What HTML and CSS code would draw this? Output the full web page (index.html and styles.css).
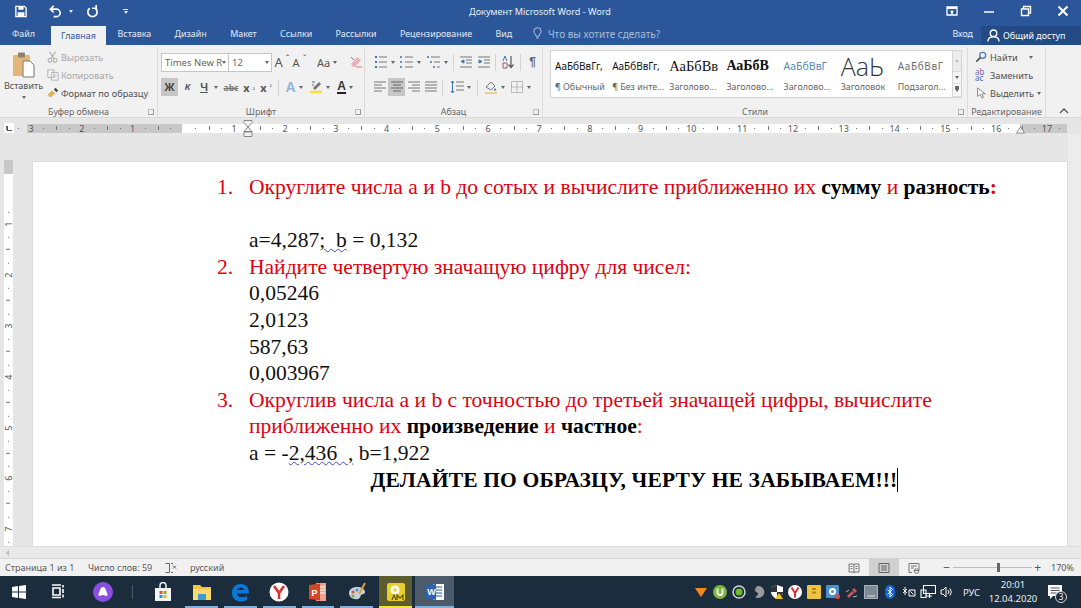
FILE: index.html
```html
<!DOCTYPE html>
<html lang="ru">
<head>
<meta charset="utf-8">
<title>Документ Microsoft Word - Word</title>
<link rel="stylesheet" href="styles.css">
</head>
<body>
<div class="app">
  <header class="titlebar">
    <div class="qat">
      <svg class="q-save" viewBox="0 0 14 14"><path d="M1 1h10l2 2v10H1z" fill="none" stroke="#fff" stroke-width="1.6"/><path d="M4 1h6v4H4zM3 8h8v5H3z" fill="#fff"/></svg>
      <svg class="q-undo" viewBox="0 0 14 14"><path d="M5 1L1.500 4.500 5 8M2 4.500h6a4 4 0 0 1 0 8H5" fill="none" stroke="#fff" stroke-width="1.800"/></svg>
      <span class="c cw q-c1"></span>
      <svg class="q-redo" viewBox="0 0 14 14"><path d="M4 3.500a5 5 0 1 0 6 0M6.500 3.500h4.500V0" fill="none" stroke="#fff" stroke-width="1.800"/></svg>
      <span class="q-more"><i></i><span class="c cw"></span></span>
    </div>
    <div class="doc-title">Документ Microsoft Word - Word</div>
    <div class="winctl">
      <svg class="wc" viewBox="0 0 12 12"><path d="M1 2h10v8H1z" fill="none" stroke="#fff" stroke-width="1.300"/><path d="M1 2h10v2H1zM6 5l2 2H7v2H5V7H4z" fill="#fff"/></svg>
      <svg class="wc" viewBox="0 0 12 12"><path d="M1 7h10" stroke="#fff" stroke-width="1.500"/></svg>
      <svg class="wc" viewBox="0 0 12 12"><path d="M1.500 4h7v6.500h-7zM3.500 3.500V1.500h7v6.500h-2" fill="none" stroke="#fff" stroke-width="1.400"/></svg>
      <svg class="wc" viewBox="0 0 12 12"><path d="M1.500 1.500l9 9M10.500 1.500l-9 9" stroke="#fff" stroke-width="2"/></svg>
    </div>
  </header>

  <nav class="tabs">
    <a class="tab file">Файл</a>
    <a class="tab active">Главная</a>
    <a class="tab">Вставка</a>
    <a class="tab">Дизайн</a>
    <a class="tab">Макет</a>
    <a class="tab">Ссылки</a>
    <a class="tab">Рассылки</a>
    <a class="tab">Рецензирование</a>
    <a class="tab">Вид</a>
    <span class="tell">
      <svg class="bulb" viewBox="0 0 10 14"><path d="M3.500 10C3 8 1 7 1 4.500a4 4 0 0 1 8 0C9 7 7 8 6.500 10zM3.500 12h3" fill="none" stroke="#c5d3e8" stroke-width="1"/></svg>
      Что вы хотите сделать?
    </span>
    <span class="signin">Вход</span>
    <span class="share">
      <svg class="person" viewBox="0 0 14 14"><circle cx="7" cy="4.500" r="3.500" fill="none" stroke="#fff" stroke-width="1.500"/><path d="M1 13.500c0-3.500 2.500-5 6-5s6 1.500 6 5" fill="none" stroke="#fff" stroke-width="1.500"/></svg>
      Общий доступ
    </span>
  </nav>

  <section class="ribbon">
    <div class="group g-clip">
      <div class="g-body clip-body">
        <div class="paste">
          <svg class="paste-ic" viewBox="0 0 24 26"><rect x="1" y="3" width="17" height="21" rx="1" fill="#e3b779"/><rect x="6" y="0.500" width="7" height="5" rx="1" fill="#8c8170"/><path d="M11 9h7l4 4v12H11z" fill="#fff" stroke="#777"/></svg>
          <span>Вставить</span>
          <span class="c"></span>
        </div>
        <div class="clip-list">
          <div class="row dim"><svg class="ic12" viewBox="0 0 14 14"><circle cx="3.500" cy="11" r="2.200" fill="none" stroke="#aaa" stroke-width="1.200"/><circle cx="9.500" cy="11" r="2.200" fill="none" stroke="#aaa" stroke-width="1.200"/><path d="M4.500 9L10 1M8.500 9L3 1" stroke="#aaa" stroke-width="1.200"/></svg>Вырезать</div>
          <div class="row dim"><svg class="ic12" viewBox="0 0 14 14"><path d="M1 1h7v9H1zM5 4h8v9H5z" fill="#f6f6f6" stroke="#aaa"/><path d="M7 7h4M7 9h4" stroke="#bbb"/></svg>Копировать</div>
          <div class="row"><svg class="ic12" viewBox="0 0 14 14"><path d="M1 9l5-5 4 4-3 1-2 3-1-1-1 1z" fill="#e0b050"/><path d="M8 3l2-2 3 3-2 2z" fill="#444"/></svg>Формат по образцу</div>
        </div>
      </div>
      <div class="g-label">Буфер обмена<i class="launch"></i></div>
    </div>

    <div class="group g-font">
      <div class="g-body stack">
        <div class="row1">
          <span class="combo font-name"><span class="clip">Times New R</span><span class="c"></span></span>
          <span class="combo font-size">12<span class="c"></span></span>
          <span class="b w18 big-a">A<sup>ˆ</sup></span>
          <span class="b w17 small-a">A<sup>ˇ</sup></span>
          <span class="b w30 aa">Aa<span class="c"></span></span>
          <svg class="ic14 eraser" viewBox="0 0 14 14"><path d="M2 9l6-7 4 3-6 7H4z" fill="#ecb0b8"/><path d="M7 12h6" stroke="#e07080"/><path d="M2 2l3 3" stroke="#777"/></svg>
        </div>
        <div class="row2">
          <span class="b w17 on bold">Ж</span>
          <span class="b w19 ital">К</span>
          <span class="b w24 und"><u>Ч</u><span class="c"></span></span>
          <span class="b w20 strike">abc</span>
          <span class="b w16 sub">x<small>₂</small></span>
          <span class="b w18 sub">x<small>²</small></span>
          <i class="sep"></i>
          <span class="b w24 a-effect">A<span class="c"></span></span>
          <span class="b w26 hl"><svg class="ic14" viewBox="0 0 14 14"><path d="M3 2h3M3 5h2" stroke="#666"/><path d="M4 8l6-6 2 2-6 6z" fill="#777"/><path d="M1 12h12" stroke="#f7e23c" stroke-width="2.500"/></svg><span class="c"></span></span>
          <span class="b w26 fc"><span class="fc-a">А</span><span class="c"></span></span>
        </div>
      </div>
      <div class="g-label">Шрифт<i class="launch"></i></div>
    </div>

    <div class="group g-para">
      <div class="g-body stack para-stack">
        <div class="row1">
          <span class="b w26"><svg class="ic14" viewBox="0 0 14 14"><path d="M1 2h2M1 7h2M1 12h2" stroke="#3b72b8" stroke-width="2"/><path d="M5 2h8M5 7h8M5 12h8" stroke="#777"/></svg><span class="c"></span></span>
          <span class="b w27"><svg class="ic14" viewBox="0 0 14 14"><path d="M1 1v2M1 6v2M1 11v2" stroke="#3b72b8" stroke-width="1.500"/><path d="M5 2h8M5 7h8M5 12h8" stroke="#777"/></svg><span class="c"></span></span>
          <span class="b w26"><svg class="ic14" viewBox="0 0 14 14"><path d="M0 2h2M3 7h2M6 12h2" stroke="#3b72b8" stroke-width="1.500"/><path d="M4 2h9M7 7h6M10 12h3" stroke="#777"/></svg><span class="c"></span></span>
          <i class="sep"></i>
          <span class="b w18"><svg class="ic14" viewBox="0 0 14 14"><path d="M1 2h12M7 5h6M7 8h6M1 12h12" stroke="#777"/><path d="M5 5L2 6.500 5 8z" fill="#3b72b8" stroke="#3b72b8"/></svg></span>
          <span class="b w17"><svg class="ic14" viewBox="0 0 14 14"><path d="M1 2h12M7 5h6M7 8h6M1 12h12" stroke="#777"/><path d="M2 5l3 1.500L2 8z" fill="#3b72b8" stroke="#3b72b8"/></svg></span>
          <i class="sep"></i>
          <span class="b w18"><svg class="ic14" viewBox="0 0 14 14"><path d="M10 1v11M7.500 9.500L10 12.500l2.500-3" fill="none" stroke="#555" stroke-width="1.200"/><path d="M2 6l2-5 2 5" fill="none" stroke="#3b72b8"/><path d="M2 8h4v5H2z" fill="none" stroke="#a0526d"/></svg></span>
          <i class="sep"></i>
          <span class="b w17 pil">¶</span>
        </div>
        <div class="row2">
          <span class="b w17"><svg class="ic14" viewBox="0 0 14 14"><path d="M1 2h12M1 5h8M1 8h12M1 11h8" stroke="#777"/></svg></span>
          <span class="b w17 on"><svg class="ic14" viewBox="0 0 14 14"><path d="M1 2h12M3 5h8M1 8h12M3 11h8" stroke="#666"/></svg></span>
          <span class="b w17"><svg class="ic14" viewBox="0 0 14 14"><path d="M1 2h12M5 5h8M1 8h12M5 11h8" stroke="#777"/></svg></span>
          <span class="b w17"><svg class="ic14" viewBox="0 0 14 14"><path d="M1 2h12M1 5h12M1 8h12M1 11h12" stroke="#777"/></svg></span>
          <i class="sep"></i>
          <span class="b w28"><svg class="ic14" viewBox="0 0 14 14"><path d="M6 2h8M6 6h8M6 10h8" stroke="#777"/><path d="M2.500 1v12M1 3l1.500-2L4 3M1 11l1.500 2L4 11" fill="none" stroke="#3b72b8"/></svg><span class="c"></span></span>
          <i class="sep"></i>
          <span class="b w26"><svg class="ic14" viewBox="0 0 14 14"><path d="M2 7l5-5 4 4-4 4z" fill="none" stroke="#777"/><path d="M11 8l1.500 2.500h-3z" fill="#3b72b8"/><path d="M1 13h12" stroke="#e8c660" stroke-width="1.500"/></svg><span class="c"></span></span>
          <span class="b w26"><svg class="ic14" viewBox="0 0 14 14"><path d="M1.500 1.500h11v11h-11zM7 1.500v11M1.500 7h11" fill="none" stroke="#888" stroke-dasharray="1 1"/></svg><span class="c"></span></span>
        </div>
      </div>
      <div class="g-label">Абзац<i class="launch"></i></div>
    </div>

    <div class="group g-styles">
      <div class="g-body gallery-wrap">
        <div class="gallery">
          <div class="st"><b class="s-n">АаБбВвГг,</b><span>¶ Обычный</span></div>
          <div class="st"><b class="s-n">АаБбВвГг,</b><span>¶ Без инте...</span></div>
          <div class="st"><b class="s-h1">АаБбВв</b><span>Заголово...</span></div>
          <div class="st"><b class="s-h2">АаБбВ</b><span>Заголово...</span></div>
          <div class="st"><b class="s-h3">АаБбВвГ</b><span>Заголово...</span></div>
          <div class="st"><b class="s-t">АаЬ</b><span>Заголовок</span></div>
          <div class="st"><b class="s-sub">АаБбВвГ</b><span>Подзагол...</span></div>
        </div>
        <div class="gal-btns">
          <span class="off"><i class="c up"></i></span>
          <span><i class="c"></i></span>
          <span><i class="c more"></i></span>
        </div>
      </div>
      <div class="g-label">Стили<i class="launch"></i></div>
    </div>

    <div class="group g-edit">
      <div class="g-body edit-list">
        <div class="row"><svg class="ic12" viewBox="0 0 14 14"><circle cx="9" cy="5" r="3.500" fill="none" stroke="#4a7ab5" stroke-width="1.500"/><path d="M6.500 7.500L1.500 12.500" stroke="#555" stroke-width="2"/></svg>Найти<span class="c ecar"></span></div>
        <div class="row"><span class="abac"><b class="ab">ab</b><b class="ac">ac</b></span>Заменить</div>
        <div class="row"><svg class="ic12" viewBox="0 0 14 14"><path d="M3 1v10l3-2.500L8 13l2-1-2-4h4z" fill="#fff" stroke="#777"/></svg>Выделить<span class="c"></span></div>
      </div>
      <div class="g-label">Редактирование</div>
    </div>
    <div class="collapse"><svg viewBox="0 0 10 6"><path d="M1 5l4-4 4 4" fill="none" stroke="#555" stroke-width="1.300"/></svg></div>
  </section>

  <div class="ruler-row">
    <span class="corner"><i></i></span>
    <div class="ruler-track">
      <span class="rc first">3</span><span class="rc">2</span><span class="rc">1</span><span class="rc"></span><span class="rc">1</span><span class="rc">2</span><span class="rc">3</span><span class="rc">4</span><span class="rc">5</span><span class="rc">6</span><span class="rc">7</span><span class="rc">8</span><span class="rc">9</span><span class="rc">10</span><span class="rc">11</span><span class="rc">12</span><span class="rc">13</span><span class="rc">14</span><span class="rc">15</span><span class="rc">16</span><span class="rc">17</span>
      <svg class="indent" viewBox="0 0 10 17"><path d="M1 .500h8v2L5 7 1 2.500zM5 7l4 4.500H1zM1 12h8v4.500H1z" fill="#f3f3f3" stroke="#888"/></svg>
      <svg class="r-indent" viewBox="0 0 10 8"><path d="M5 .500l4.500 7H.500z" fill="#f3f3f3" stroke="#888"/></svg>
    </div>
  </div>

  <main class="workspace">
    <div class="vruler">
      <span class="vc zero"></span><span class="vc">1</span><span class="vc">2</span><span class="vc">3</span><span class="vc">4</span><span class="vc">5</span><span class="vc">6</span><span class="vc">7</span>
    </div>
    <article class="page">
      <p class="red"><span class="num">1.</span>Округлите числа а и b до сотых и вычислите приближенно их <b class="blk">сумму</b> и <b class="blk">разность</b><b>:</b></p>
      <p>&nbsp;</p>
      <p>a=4,287<span class="wavy">;  b</span> = 0,132</p>
      <p class="red"><span class="num">2.</span>Найдите четвертую значащую цифру для чисел:</p>
      <p>0,05246</p>
      <p>2,0123</p>
      <p>587,63</p>
      <p>0,003967</p>
      <p class="red"><span class="num">3.</span>Округлив числа а и b с точностью до третьей значащей цифры, вычислите приближенно их <b class="blk">произведение</b> и <b class="blk">частное</b>:</p>
      <p>a = -<span class="wavy">2,436  ,</span> b=1,922</p>
      <p class="center"><b>ДЕЛАЙТЕ ПО ОБРАЗЦУ, ЧЕРТУ НЕ ЗАБЫВАЕМ!!!</b><i class="caret"></i></p>
    </article>
    <div class="vscroll"></div>
  </main>
  <div class="hscroll"><i class="c left"></i></div>

  <footer class="status">
    <span class="s1">Страница 1 из 1</span>
    <span class="s2">Число слов: 59</span>
    <svg class="s3" viewBox="0 0 12 12"><path d="M.500 1.500h4v9h-4M6 1.500h2M6 10.500h2" fill="none" stroke="#666"/><path d="M8 3.500l3 3M11 3.500l-3 3" stroke="#666"/></svg>
    <span class="s4">русский</span>
    <div class="views">
      <span class="v"><svg viewBox="0 0 12 12"><path d="M1 2h4.500l.5 1 .5-1H11v8H6.500L6 11l-.5-1H1zM6 3v8M2.500 4.500h2M2.500 6.500h2M7.500 4.500h2M7.500 6.500h2" fill="none" stroke="#777"/></svg></span>
      <span class="v active"><svg viewBox="0 0 12 12"><path d="M1 1.500h10v9H1zM3 4h6M3 6h6M3 8h6" fill="none" stroke="#666"/></svg></span>
      <span class="v"><svg viewBox="0 0 12 12"><path d="M1 1.500h10v7H6.500M1 1.500v9h3M3 4h6M3 6h3" fill="none" stroke="#777"/><circle cx="8.500" cy="9" r="2.300" fill="none" stroke="#777"/></svg></span>
    </div>
    <span class="z-minus">−</span>
    <span class="slider"><i></i></span>
    <span class="z-plus">+</span>
    <span class="z-val">170%</span>
  </footer>

  <div class="taskbar">
    <span class="slot"><svg class="i16" viewBox="0 0 16 16"><path d="M1 3l6-1v5.500H1zM8 2l7-1v6.500H8zM1 8.500h6V14l-6-1zM8 8.500h7V15l-7-1z" fill="#fff"/></svg></span>
    <span class="slot"><svg class="i16" viewBox="0 0 16 16"><path d="M2 1h9M2 13.500h9M3 4h7v7H3zM13 1v2.500M13 5v4M13 10.500v3" fill="none" stroke="#fff" stroke-width="1.600"/></svg></span>
    <span class="slot alice"><svg class="i20" viewBox="0 0 20 20"><circle cx="10" cy="10" r="10" fill="#8a4fe0"/><path d="M10 5c2.500 0 3 3.500 4.500 7 .5 1.500-1 2.500-2.500 1.500-1.200-.8-2.800-.8-4 0C6.500 14.500 5 13.500 5.500 12 7 8.500 7.500 5 10 5z" fill="#fff"/></svg></span>
    <i class="tb-sep"></i>
    <span class="slot"><svg class="i20" viewBox="0 0 20 20"><path d="M2 6h16v13H2z" fill="#f4f4f4"/><path d="M7 6V3.500a3 3 0 0 1 6 0V6" fill="none" stroke="#f4f4f4" stroke-width="1.500"/><path d="M6.500 9h3v3h-3z" fill="#e8532b"/><path d="M10.500 9h3v3h-3z" fill="#7ab800"/><path d="M6.500 13h3v3h-3z" fill="#1a9cdc"/><path d="M10.500 13h3v3h-3z" fill="#f7b500"/></svg></span>
    <span class="slot run"><svg class="i20" viewBox="0 0 20 20"><path d="M1 3h7l2 2h9v13H1z" fill="#f5c343"/><path d="M1 7h18v11H1z" fill="#ffd968"/><path d="M6 12h8v6H6z" fill="#3d9ad1"/></svg></span>
    <span class="slot run"><svg class="i20" viewBox="0 0 20 20"><path d="M2 11C2 5 6 2 11 2c5 0 8 3.500 8 9.500H7c.3 4 5.500 5 10 2.500v4c-6 3-15 1.500-15-7zM7 8h7c0-3.500-6-3.500-7 0z" fill="#0a78d6"/></svg></span>
    <span class="slot run"><svg class="i20" viewBox="0 0 20 20"><circle cx="10" cy="10" r="9.500" fill="#fff"/><path d="M5 4l5 7 5-7M10 11v6" fill="none" stroke="#e12c2c" stroke-width="2.500"/></svg></span>
    <span class="slot run"><svg class="i20" viewBox="0 0 20 20"><path d="M8 1h10v18H8z" fill="#f0a090"/><path d="M11 5h6M11 8h6M11 11h6" stroke="#fff" stroke-width="1.200"/><path d="M1 3l11-1.500v17L1 17z" fill="#d0472a"/><text x="3.500" y="13.500" class="tb-l">P</text></svg></span>
    <span class="slot run"><svg class="i20" viewBox="0 0 20 20"><path d="M2 11c0-4 4-6 8-6s8 2 8 5c0 2.500-3 2-4 3s0 3-3 4c-5 1-9-2-9-6z" fill="#c9cfd6"/><circle cx="6" cy="10" r="1.500" fill="#e04c3c"/><circle cx="10" cy="8" r="1.500" fill="#3b8ed8"/><circle cx="6" cy="14" r="1.500" fill="#6ab04c"/><path d="M12 12L18 1" stroke="#d9a441" stroke-width="2"/></svg></span>
    <span class="slot run yellow"><svg class="i20" viewBox="0 0 20 20"><rect x="1" y="1" width="18" height="18" rx="2" fill="#e8d02c"/><circle cx="9" cy="8" r="4.500" fill="#fff"/><circle cx="9" cy="8" r="1.800" fill="#e8d02c"/><path d="M6 18l2-5 2 5M11 18v-5l3 3 3-3v5" fill="none" stroke="#6a5a00" stroke-width="1.300"/></svg></span>
    <span class="slot run word"><svg class="i20" viewBox="0 0 20 20"><path d="M8 2h11v16H8z" fill="#fff"/><path d="M11 5h6M11 8h6M11 11h6M11 14h6" stroke="#2b579a" stroke-width="1.200"/><path d="M1 3.500l10-1.500v16L1 16.500z" fill="#2b62b5"/><text x="2.200" y="12.500" class="tb-l">W</text></svg></span>
    <div class="tray">
      <span class="t"><svg class="i14" viewBox="0 0 14 14"><path d="M1 3h12L7 12z" fill="#f08a1d"/></svg></span>
      <span class="t"><svg class="i14" viewBox="0 0 14 14"><circle cx="7" cy="7" r="7" fill="#7eb53f"/><path d="M4.500 3.500v4a2.500 2.500 0 0 0 5 0v-4" fill="none" stroke="#fff" stroke-width="1.800"/></svg></span>
      <span class="t"><svg class="i14" viewBox="0 0 14 14"><circle cx="7" cy="7" r="6" fill="none" stroke="#cfd6d6" stroke-width="1.500"/><circle cx="7" cy="7" r="3.500" fill="#6cc024"/></svg></span>
      <span class="t"><svg class="i14" viewBox="0 0 14 14"><path d="M7 1a6 6 0 1 1-3 11c3-1 3-3 3-4-1-.5-3-1-3-3 0-2 2-4 3-4z" fill="#9a9a9a"/></svg></span>
      <span class="t"><svg class="i14" viewBox="0 0 14 14"><path d="M7 0l6 2v5c0 3-2.500 5.500-6 7-3.500-1.500-6-4-6-7V2z" fill="#fff"/><path d="M7 0v7H1V2zM7 7h6c0 3-2.500 5.500-6 7z" fill="#333"/><path d="M9 8l4 6H5z" fill="#f5c518"/></svg></span>
      <span class="t"><svg class="i14" viewBox="0 0 14 14"><circle cx="7" cy="7" r="7" fill="#fff"/><path d="M3.500 2.500L7 8l3.500-5.500M7 8v4.500" fill="none" stroke="#e12c2c" stroke-width="2"/></svg></span>
      <span class="t"><svg class="i14" viewBox="0 0 14 14"><rect width="14" height="14" rx="1" fill="#efc33d"/><path d="M5 3h4v2H5zM5 6.500h4v2H5z" fill="#b9801d"/></svg></span>
      <span class="t"><svg class="i14" viewBox="0 0 14 14"><rect width="13" height="13" rx="1" fill="#4a90c8"/><circle cx="6.500" cy="6.500" r="3.500" fill="#fff"/><circle cx="6.500" cy="6.500" r="1.500" fill="#4a90c8"/><circle cx="11.500" cy="11.500" r="2.500" fill="#d94848"/></svg></span>
      <span class="t"><svg class="i14" viewBox="0 0 14 14"><path d="M2 11l5-5 2 2-5 5zM9 3l3 3-2 2-3-3z" fill="#c9565c"/><path d="M1 7l3-2M8 12l4-1" stroke="#bbb"/></svg></span>
      <span class="t"><svg class="i14" viewBox="0 0 14 14"><rect x=".500" y=".500" width="13" height="13" fill="#7d8a96" stroke="#a9b2ba"/><path d="M3 11h8" stroke="#dfe3e6"/></svg></span>
      <span class="t"><svg class="i14" viewBox="0 0 14 14"><rect x="2" width="10" height="14" rx="5" fill="#1467d2"/><path d="M4.500 4.500l5 5L7 12V2l2.500 2.500-5 5" fill="none" stroke="#fff"/></svg></span>
      <span class="t"><svg class="i14" viewBox="0 0 14 14"><path d="M3 2v8M1 4l4 4M5 4L1 8" stroke="#fff"/><path d="M7 5h6v6H7zM8.500 6.500l3 3" fill="none" stroke="#fff"/></svg></span>
      <span class="t"><svg class="i16" viewBox="0 0 16 16"><path d="M3.500 1.500h12v8h-12zM1 6h5v7.500H1zM6 12h6M9.500 9.500V14" fill="none" stroke="#fff" stroke-width="1.100"/></svg></span>
      <span class="t"><svg class="i14" viewBox="0 0 14 14"><path d="M1 5h2l3-3v10L3 9H1z" fill="none" stroke="#fff"/><path d="M8 5a3 3 0 0 1 0 4M10 3.500a6 6 0 0 1 0 7" fill="none" stroke="#fff"/></svg></span>
      <span class="lang">РУС</span>
      <span class="clock"><span>20:01</span><span>12.04.2020</span></span>
      <span class="notif">
        <svg class="i16" viewBox="0 0 16 16"><path d="M1 1h14v11H6l-3 3v-3H1z" fill="#fff"/><path d="M3.500 4h9M3.500 6.500h9M3.500 9h6" stroke="#223" stroke-width=".8"/></svg>
        <b class="badge">3</b>
      </span>
    </div>
  </div>
</div>
</body>
</html>
```
FILE: styles.css
```css
* { box-sizing: border-box; }
html, body { margin: 0; height: 100%; overflow: hidden; }
body { font-family: "Noto Sans", "Open Sans", sans-serif; font-size: 9.200px; color: #505050; }
.app { width: 1081px; height: 608px; display: flex; flex-direction: column; background: #e6e6e6; }
i { display: block; }

/* carets */
.c { display: inline-block; width: 0; height: 0; border-left: 2.500px solid transparent; border-right: 2.500px solid transparent; border-top: 3px solid #666; flex: none; }
.cw { border-top-color: #dfe7f3; }
.c.up { border-top: 0; border-bottom: 3px solid #bbb; }
.c.more { box-shadow: 0 -3px 0 0 #666; }
.c.left { border: 0; border-top: 3px solid transparent; border-bottom: 3px solid transparent; border-right: 3px solid #bbb; }

/* title bar */
.titlebar { height: 22px; background: #2b579a; display: flex; align-items: center; flex: none; }
.qat { display: flex; align-items: center; width: 400px; }
.q-save { width: 12px; height: 13px; margin-left: 15px; }
.q-undo { width: 13px; height: 13px; margin-left: 22px; }
.q-c1 { margin-left: 7px; }
.q-redo { width: 13px; height: 13px; margin-left: 13px; }
.q-more { margin-left: 24px; display: flex; flex-direction: column; align-items: center; gap: 1px; }
.q-more i { width: 5px; height: 1px; background: #dfe7f3; }
.doc-title { width: 280px; text-align: center; color: #e8eef7; font-size: 9.100px; }
.winctl { margin-left: auto; display: flex; align-items: center; padding-right: 12px; gap: 25px; }
.wc { width: 12px; height: 12px; }

/* tabs */
.tabs { height: 23px; background: #2b579a; display: flex; align-items: stretch; color: #e3eaf5; flex: none; font-size: 8.900px; }
.tab { display: flex; align-items: center; padding: 0 11.700px; }
.tab.file { padding: 0 12px; margin-right: 4px; }
.tab.active { background: #f1f1f1; color: #2b579a; margin-top: 4px; padding: 0 10px; }
.tell { display: flex; align-items: center; gap: 6px; margin-left: 9px; color: #a7bcdb; font-size: 10px; }
.bulb { width: 9px; height: 13px; }
.signin { margin-left: auto; align-self: center; margin-right: 8px; }
.share { width: 100px; background: #234a85; margin-top: 4px; display: flex; align-items: center; gap: 3px; padding-left: 6px; color: #fff; }
.person { width: 13px; height: 13px; }

/* ribbon */
.ribbon { height: 73px; background: #f1f1f1; border-bottom: 1px solid #d9d9d9; display: flex; flex: none; }
.group { display: flex; flex-direction: column; border-right: 1px solid #dcdcdc; margin-top: 2px; }
.g-body { flex: 1; min-height: 0; }
.g-label { height: 14px; text-align: center; color: #666; font-size: 8.800px; line-height: 18px; position: relative; flex: none; }
.launch { position: absolute; right: 3px; top: 6px; width: 6px; height: 6px; border-right: 1px solid #999; border-bottom: 1px solid #999; border-left: 1px solid #bbb; border-top: 1px solid #bbb; }
.g-clip { width: 158px; }
.g-font { width: 207px; }
.g-para { width: 178px; }
.g-styles { width: 425px; }
.g-edit { width: 78px; }
.collapse { flex: 1; display: flex; align-items: flex-end; justify-content: center; padding-bottom: 3px; }
.collapse svg { width: 10px; height: 6px; }

.clip-body { display: flex; padding-top: 1px; }
.paste { width: 47px; display: flex; flex-direction: column; align-items: center; color: #505050; padding-top: 4px; font-size: 9px; }
.paste-ic { width: 24px; height: 26px; margin-bottom: 1px; flex: none; }
.paste .c { margin-top: 4px; }
.clip-list { display: flex; flex-direction: column; }
.row { height: 18px; display: flex; align-items: center; gap: 2px; white-space: nowrap; flex: none; }
.dim { color: #a8a8a8; }
.ic12 { width: 12px; height: 12px; flex: none; }
.ic14 { width: 14px; height: 14px; flex: none; }

.stack { display: flex; flex-direction: column; gap: 7px; padding: 6px 0 0 3px; }
.row1, .row2 { display: flex; align-items: center; height: 18px; flex: none; }
.b { height: 18px; display: flex; align-items: center; justify-content: center; gap: 3px; flex: none; color: #555; }
.w16 { width: 16px; } .w17 { width: 17px; } .w18 { width: 18px; } .w19 { width: 19px; } .w20 { width: 20px; }
.w24 { width: 24px; } .w26 { width: 26px; } .w27 { width: 27px; } .w28 { width: 28px; } .w30 { width: 30px; }
.on { background: #c6c6c6; }
.combo { height: 19px; background: #fff; border: 1px solid #c6c6c6; display: flex; align-items: center; justify-content: space-between; padding: 0 2px 0 3px; font-size: 9.500px; color: #666; flex: none; white-space: nowrap; }
.clip { overflow: hidden; white-space: nowrap; }
.font-name { width: 67px; border-right: 0; }
.font-size { width: 44px; margin-right: 1px; }
.big-a { font-size: 13px; }
.big-a sup, .small-a sup { font-size: 9px; line-height: 0; position: relative; top: -3px; }
.small-a { font-size: 11px; }
.aa { font-size: 11px; margin-left: 4px; }
.eraser { margin-left: 7px; }
.bold { font-weight: 700; font-size: 11px; font-family: "Liberation Sans", sans-serif; color: #444; }
.ital { font-style: italic; font-weight: 700; font-family: "Liberation Sans", sans-serif; color: #555; }
.und { font-weight: 700; font-size: 11px; font-family: "Liberation Sans", sans-serif; gap: 6px; }
.strike { font-size: 8.500px; font-weight: 700; text-decoration: line-through; color: #777; }
.sub { font-weight: 700; font-size: 11px; }
.sub small { font-size: 6px; font-weight: 400; }
.sep { width: 1px; height: 17px; background: #d4d4d4; margin: 0 3px; flex: none; }
.a-effect { font-size: 14px; font-weight: 700; color: #8db4e2; font-family: "Liberation Sans", sans-serif; }
.fc-a { font-size: 12px; font-weight: 700; color: #333; font-family: "Liberation Sans", sans-serif; border-bottom: 2px solid #222; line-height: 12px; }

.para-stack { padding: 6px 0 0 6px; }
.pil { font-size: 12px; font-family: "Liberation Sans", sans-serif; font-weight: 700; color: #666; }

/* styles */
.gallery-wrap { display: flex; padding: 3px 0 0 7px; }
.gallery { width: 402px; height: 48px; background: #fff; border: 1px solid #d4d4d4; border-right: 0; display: flex; padding-left: 1px; }
.st { width: 57.300px; display: flex; flex-direction: column; align-items: flex-start; padding-left: 3px; overflow: hidden; white-space: nowrap; }
.st b { height: 30px; display: flex; align-items: center; font-weight: 400; color: #111; flex: none; }
.st span { font-size: 8.900px; color: #666; line-height: 12px; }
.s-n { font-size: 10px; font-family: "Noto Sans", sans-serif; }
.st b.s-h1 { font-family: "Liberation Serif", serif; font-size: 14.500px; }
.st b.s-h2 { font-family: "Liberation Serif", serif; font-size: 14px; font-weight: 700; }
.st b.s-h3 { font-size: 10.500px; color: #5b86bd; }
.st b.s-t { font-size: 25px; font-weight: 300; font-family: "Open Sans", sans-serif; color: #333; }
.st b.s-sub { font-size: 10px; color: #6e6e6e; letter-spacing: .6px; }
.gal-btns { width: 10px; height: 48px; display: flex; flex-direction: column; border: 1px solid #d4d4d4; background: #f6f6f6; }
.gal-btns span { flex: 1; display: flex; align-items: center; justify-content: center; border-bottom: 1px solid #dcdcdc; }
.gal-btns .off { flex: 1.700; background: #ececec; }

.edit-list { display: flex; flex-direction: column; padding: 1px 0 0 7px; }
.edit-list .row { gap: 3px; }
.ecar { margin-left: 8px; }
.abac { display: flex; flex-direction: column; width: 12px; font-size: 8px; line-height: 6.500px; flex: none; }
.abac b { font-weight: 400; display: block; }
.ab { color: #7a5fa8; }
.ac { color: #3f6fae; }

/* rulers */
.ruler-row { height: 16px; display: flex; align-items: center; flex: none; padding-top: 4px; }
.corner { width: 10px; height: 10px; background: #fff; margin-left: 4px; display: flex; align-items: center; justify-content: center; }
.corner i { width: 5px; height: 5px; border-left: 1.500px solid #555; border-bottom: 1.500px solid #555; }
.ruler-track { width: 1040px; height: 9px; margin-left: 13px; display: flex; position: relative; background: linear-gradient(90deg, #c8c8c8 155px, #fff 155px, #fff 993px, #c8c8c8 993px); }
.rc { width: 50.800px; flex: none; text-align: center; font-size: 9px; line-height: 9px; color: #555;
  background:
    linear-gradient(#777, #777) 0 center / 1px 4px no-repeat,
    linear-gradient(#777, #777) 25% center / 1px 1px no-repeat,
    linear-gradient(#777, #777) 75% center / 1px 1px no-repeat; }
.rc.first { margin-left: -21.400px; }
.indent { position: absolute; left: 216px; top: -4px; width: 10px; height: 17px; }
.r-indent { position: absolute; left: 989px; top: 2px; width: 9px; height: 8px; }

.workspace { flex: 1; min-height: 0; display: flex; }
.vruler { width: 9px; margin: 26px 19px 0 4px; padding-top: 14px; background: linear-gradient(#c8c8c8 14px, #fff 14px); overflow-x: visible; overflow-y: clip; flex: none; }
.vc { display: flex; height: 50.800px; align-items: center; justify-content: center; writing-mode: vertical-rl; transform: rotate(180deg); font-size: 9px; line-height: 9px; color: #555;
  background:
    linear-gradient(#777, #777) center 0 / 4px 1px no-repeat,
    linear-gradient(#777, #777) center 25% / 1px 1px no-repeat,
    linear-gradient(#777, #777) center 75% / 1px 1px no-repeat; }
.vc.zero { margin-top: -25.400px; }
.page { width: 1036px; flex: none; margin-top: 27px; background: #fff; border: 1px solid #dcdcdc; border-bottom: 0; padding: 12px 47px 0 216px; font-family: "Liberation Serif", serif; font-size: 21.550px; line-height: 26.600px; color: #111; overflow: hidden; }
.page p { margin: 0; }
.red { color: #e0000f; }
.blk { color: #000; }
.red b:not(.blk) { color: #e0000f; }
.num { display: inline-block; width: 32px; margin-left: -32px; }
.wavy { white-space: pre; text-decoration: underline wavy #3c4cc0 1px; text-underline-offset: 1px; }
.center { text-align: center; color: #000; letter-spacing: .15px; }
.caret { display: inline-block; width: 1px; height: 24px; background: #000; vertical-align: -5px; }
.vscroll { flex: 1; background: #ececec; }
.hscroll { height: 13px; flex: none; background: #e9e9e9; border-top: 1px solid #dedede; border-bottom: 1px solid #d4d4d4; display: flex; align-items: center; padding-left: 6px; }

/* status */
.status { height: 17px; flex: none; background: #f1f1f1; display: flex; align-items: center; font-size: 9px; color: #5a5a5a; }
.s1 { margin-left: 5px; width: 83px; }
.s2 { width: 77px; }
.s3 { width: 12px; height: 12px; }
.s4 { margin-left: 13px; }
.views { margin-left: auto; display: flex; height: 100%; }
.v { width: 30px; display: flex; align-items: center; justify-content: center; }
.v svg { width: 12px; height: 12px; }
.v.active { background: #d0d0d0; }
.z-minus { margin-left: 14px; font-size: 12px; }
.slider { width: 79px; height: 1px; background: #bbb; margin-left: 3px; position: relative; }
.slider i { position: absolute; left: 44px; top: -4px; width: 3px; height: 9px; background: #666; }
.z-plus { font-size: 12px; margin-left: 2px; }
.z-val { margin: 0 7px 0 10px; }

/* taskbar */
.taskbar { height: 32px; flex: none; background: #1b2c3d; display: flex; align-items: center; color: #e8edf2; }
.slot { width: 38.800px; height: 32px; display: flex; align-items: center; justify-content: center; flex: none; position: relative; }
.slot.alice { margin-left: 6px; }
.run::after { content: ""; position: absolute; left: 3px; right: 3px; bottom: 0; height: 2px; background: #7fb2de; }
.slot.yellow { background: #5c5c30; width: 33px; margin: 0 3px; }
.yellow.run::after { background: #f5e23a; left: 0; right: 0; }
.word { background: #4b5b6b; }
.word.run::after { left: 0; right: 0; }
.tb-sep { width: 1px; height: 14px; background: #4a5764; margin: 0 10px; flex: none; }
.i14 { width: 14px; height: 14px; }
.i16 { width: 16px; height: 16px; }
.i20 { width: 20px; height: 20px; }
.tb-l { fill: #fff; font-size: 9px; font-weight: 700; font-family: "Liberation Sans", sans-serif; }
.tray { margin-left: auto; display: flex; align-items: center; height: 100%; }
.t { width: 18.900px; display: flex; align-items: center; justify-content: center; }
.lang { width: 31px; text-align: center; font-size: 9.500px; }
.clock { width: 52px; display: flex; flex-direction: column; align-items: center; font-size: 9.500px; line-height: 14px; }
.notif { width: 42px; position: relative; display: flex; padding-left: 8px; }
.badge { position: absolute; left: 16px; top: 7px; width: 12px; height: 12px; border-radius: 50%; background: #1b2c3d; border: 1px solid #d8d8d8; color: #fff; font-size: 8px; font-weight: 400; line-height: 10px; text-align: center; }
```
